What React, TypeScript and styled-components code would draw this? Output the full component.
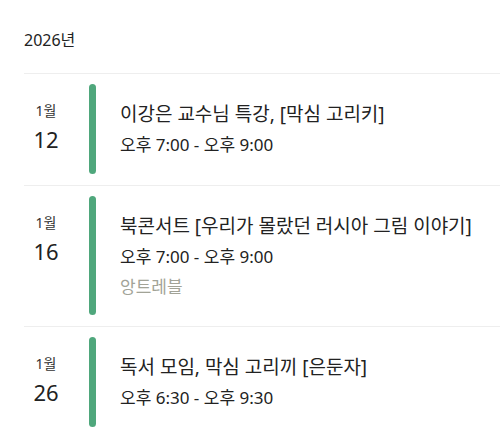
import React from "react";
import styled, { createGlobalStyle } from "styled-components";

const Global = createGlobalStyle`
  html, body { margin: 0; padding: 0; background: #ffffff; }
  body { font-family: "Noto Sans", "Noto Sans CJK KR", sans-serif; color: #222222; }
`;

const Page = styled.div`
  width: 500px;
  height: 435px;
  overflow: hidden;
  padding-left: 24px;
  box-sizing: border-box;
`;

const Year = styled.div`
  font-size: 16px;
  line-height: 24px;
  padding-top: 28px;
  padding-bottom: 21px;
  color: #222222;
`;

const Row = styled.div`
  display: flex;
  align-items: stretch;
  border-top: 1px solid #eeeeee;
  padding: 10px 0 11px;
`;

const DateCol = styled.div`
  width: 44px;
  display: flex;
  flex-direction: column;
  align-items: center;
  justify-content: flex-start;
  padding-top: 17px;
  margin-right: 21px;
`;

const Month = styled.div`
  font-size: 14px;
  line-height: 20px;
  color: #333333;
`;

const Day = styled.div`
  font-size: 22px;
  line-height: 36px;
  color: #222222;
`;

const Bar = styled.div<{ $color: string }>`
  width: 7px;
  border-radius: 4px;
  background: ${(p) => p.$color};
  flex-shrink: 0;
`;

const Content = styled.div`
  display: flex;
  flex-direction: column;
  justify-content: flex-start;
  padding: 14px 0 14px 24px;
`;

const Title = styled.div`
  font-size: 19px;
  line-height: 32px;
  color: #222222;
  white-space: nowrap;
`;

const Time = styled.div`
  font-size: 17px;
  line-height: 30px;
  color: #222222;
`;

const Place = styled.div`
  font-size: 17px;
  line-height: 29px;
  color: #a2a397;
`;

type Ev = { month: string; day: string; title: string; time: string; place?: string };

const events: Ev[] = [
  { month: "1월", day: "12", title: "이강은 교수님 특강, [막심 고리키]", time: "오후 7:00 - 오후 9:00" },
  {
    month: "1월",
    day: "16",
    title: "북콘서트 [우리가 몰랐던 러시아 그림 이야기]",
    time: "오후 7:00 - 오후 9:00",
    place: "앙트레블",
  },
  { month: "1월", day: "26", title: "독서 모임, 막심 고리끼 [은둔자]", time: "오후 6:30 - 오후 9:30" },
];

export default function App() {
  return (
    <>
      <Global />
      <Page>
        <Year>2026년</Year>
        {events.map((e) => (
          <Row key={e.day}>
            <DateCol>
              <Month>{e.month}</Month>
              <Day>{e.day}</Day>
            </DateCol>
            <Bar $color="#4fa77c" />
            <Content>
              <Title>{e.title}</Title>
              <Time>{e.time}</Time>
              {e.place && <Place>{e.place}</Place>}
            </Content>
          </Row>
        ))}
      </Page>
    </>
  );
}
